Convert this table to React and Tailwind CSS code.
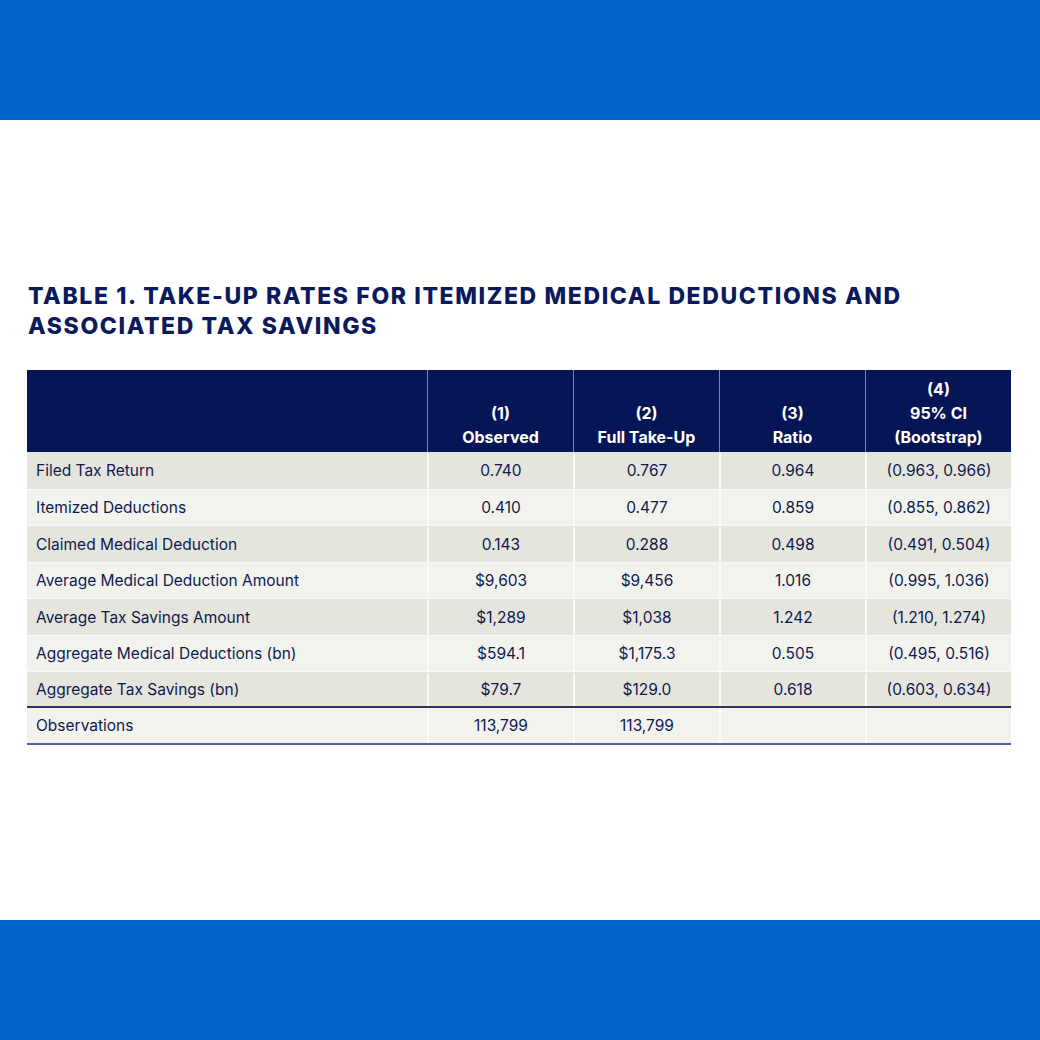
import React from "react";

const rows = [
  ["Filed Tax Return", "0.740", "0.767", "0.964", "(0.963, 0.966)"],
  ["Itemized Deductions", "0.410", "0.477", "0.859", "(0.855, 0.862)"],
  ["Claimed Medical Deduction", "0.143", "0.288", "0.498", "(0.491, 0.504)"],
  ["Average Medical Deduction Amount", "$9,603", "$9,456", "1.016", "(0.995, 1.036)"],
  ["Average Tax Savings Amount", "$1,289", "$1,038", "1.242", "(1.210, 1.274)"],
  ["Aggregate Medical Deductions (bn)", "$594.1", "$1,175.3", "0.505", "(0.495, 0.516)"],
  ["Aggregate Tax Savings (bn)", "$79.7", "$129.0", "0.618", "(0.603, 0.634)"],
];

export default function App() {
  return (
    <div className="w-[1040px] h-[1040px] bg-white flex flex-col" style={{ fontFamily: "Inter, 'Noto Sans', sans-serif" }}>
      <div className="h-[120px] bg-[#0066cc] shrink-0" />
      <div className="flex-1 flex flex-col pl-[27px] pr-[29px] pt-[161px]">
        <h1 className="text-[23px] leading-[30px] font-extrabold tracking-[0.07em] text-[#0a1a5c] pl-[1px]">
          TABLE 1. TAKE-UP RATES FOR ITEMIZED MEDICAL DEDUCTIONS AND
          <br />
          ASSOCIATED TAX SAVINGS
        </h1>
        <div className="mt-[29px] text-[#0d1a50]">
          <div className="grid grid-cols-[400px_146px_146px_146px_146px] h-[82px] bg-[#061555] text-white font-bold text-[16px] leading-[24px]">
            <div />
            {[["(1)", "Observed"], ["(2)", "Full Take-Up"], ["(3)", "Ratio"], ["(4)", "95% CI", "(Bootstrap)"]].map((c, i) => (
              <div key={i} className="border-l border-[#7e84ad] flex flex-col items-center justify-end pb-[3px]">
                {c.map((t, j) => (
                  <div key={j}>{t}</div>
                ))}
              </div>
            ))}
          </div>
          {rows.map((r, i) => (
            <div
              key={i}
              className={`grid grid-cols-[400px_146px_146px_146px_146px] h-[36.5px] text-[15.5px] pt-[1px] ${i % 2 === 0 ? "bg-[#e6e5dd]" : "bg-[#f3f3ee]"} ${i === 0 ? "" : "border-t border-[#fafaf6]"} ${i === 6 ? "border-b-2 border-b-[#2a3370]" : ""}`}
            >
              <div className="flex items-center pl-[9px]">{r[0]}</div>
              {r.slice(1).map((v, j) => (
                <div key={j} className="border-l-2 border-[#fafaf6] flex items-center justify-center">
                  {v}
                </div>
              ))}
            </div>
          ))}
          <div className="grid grid-cols-[400px_146px_146px_146px_146px] h-[37px] pt-[1px] text-[15.5px] bg-[#f3f3ee] border-b-2 border-[#5a6096]">
            <div className="flex items-center pl-[9px]">Observations</div>
            <div className="border-l-2 border-[#fafaf6] flex items-center justify-center">113,799</div>
            <div className="border-l-2 border-[#fafaf6] flex items-center justify-center">113,799</div>
            <div className="border-l-2 border-[#fafaf6]" />
            <div className="border-l-2 border-[#fafaf6]" />
          </div>
        </div>
      </div>
      <div className="h-[120px] bg-[#0066cc] shrink-0" />
    </div>
  );
}
